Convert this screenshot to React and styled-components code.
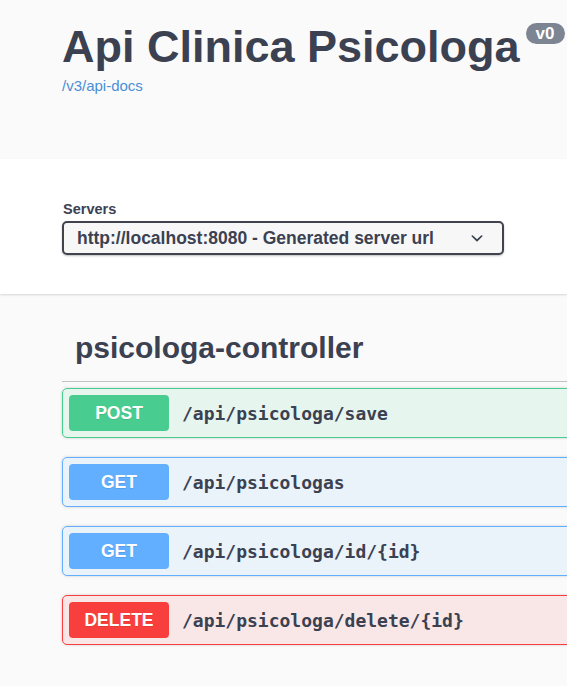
import React from "react";
import styled, { createGlobalStyle } from "styled-components";

const COLORS = {
  text: "#3b4151",
  page: "#fafafa",
  link: "#4a8fd6",
  post: "73, 204, 144",
  get: "97, 175, 254",
  delete: "249, 62, 62",
};

const endpoints = [
  { method: "POST", path: "/api/psicologa/save" },
  { method: "GET", path: "/api/psicologas" },
  { method: "GET", path: "/api/psicologa/id/{id}" },
  { method: "DELETE", path: "/api/psicologa/delete/{id}" },
];

function methodColor(method) {
  if (method === "POST") return COLORS.post;
  if (method === "DELETE") return COLORS.delete;
  return COLORS.get;
}

function App() {
  return (
    <>
      <GlobalStyle />
      <InfoContainer>
        <TitleRow>
          <Title>Api Clinica Psicologa</Title>
          <Version>v0</Version>
        </TitleRow>
        <DocsLink href="#">/v3/api-docs</DocsLink>
      </InfoContainer>

      <SchemeContainer>
        <ServersLabel>Servers</ServersLabel>
        <ServerSelect role="listbox">
          <span>http://localhost:8080 - Generated server url</span>
          <svg width="24" height="24" viewBox="0 0 20 20" aria-hidden="true">
            <path
              fill="#3b4151"
              d="M13.418 7.859a.695.695 0 01.978 0 .68.68 0 010 .969l-3.908 3.83a.697.697 0 01-.979 0l-3.908-3.83a.68.68 0 010-.969.695.695 0 01.978 0L10 11l3.418-3.141z"
            />
          </svg>
        </ServerSelect>
      </SchemeContainer>

      <Main>
        <TagHeading>psicologa-controller</TagHeading>
        <OpList>
          {endpoints.map((op) => (
            <OpBlock key={op.method + op.path} $rgb={methodColor(op.method)}>
              <Method $rgb={methodColor(op.method)}>{op.method}</Method>
              <Path>{op.path}</Path>
            </OpBlock>
          ))}
        </OpList>
      </Main>
    </>
  );
}

const GlobalStyle = createGlobalStyle`
  html, body {
    margin: 0;
    background: ${COLORS.page};
    overflow-x: hidden;
  }
  body {
    font-family: "Liberation Sans", Arial, sans-serif;
    color: ${COLORS.text};
  }
`;

const InfoContainer = styled.section`
  box-sizing: border-box;
  height: 159px;
  padding: 21px 0 0 62px;
`;

const TitleRow = styled.div`
  display: flex;
  align-items: flex-start;
`;

const Title = styled.h2`
  margin: 0;
  font-size: 45px;
  line-height: 51px;
  font-weight: 700;
  color: ${COLORS.text};
  white-space: nowrap;
`;

const Version = styled.span`
  margin: 2px 0 0 6px;
  padding: 0 10px;
  height: 21px;
  line-height: 21px;
  border-radius: 57px;
  background: #7d8492;
  color: #fff;
  font-size: 17px;
  font-weight: 700;
`;

const DocsLink = styled.a`
  display: inline-block;
  margin-top: 5px;
  font-size: 15px;
  line-height: 17px;
  color: ${COLORS.link};
  text-decoration: none;
`;

const SchemeContainer = styled.section`
  box-sizing: border-box;
  height: 135px;
  padding: 42px 0 0 62px;
  background: #fff;
  box-shadow: 0 1px 2px 0 rgba(0, 0, 0, 0.15);
`;

const ServersLabel = styled.div`
  margin: 0 0 3px 1px;
  font-size: 14.5px;
  line-height: 17px;
  font-weight: 700;
`;

const ServerSelect = styled.div`
  box-sizing: border-box;
  display: flex;
  align-items: center;
  justify-content: space-between;
  width: 442px;
  height: 34px;
  padding: 0 13px 0 13px;
  border: 2px solid #41444e;
  border-radius: 5px;
  background: #f7f7f7;
  box-shadow: 0 1px 2px 0 rgba(0, 0, 0, 0.25);
  font-size: 17.5px;
  font-weight: 700;
  white-space: nowrap;
`;

const Main = styled.main`
  padding: 25px 0 40px 62px;
`;

const TagHeading = styled.h3`
  margin: 0;
  padding: 12px 25px 16px 13px;
  border-bottom: 1px solid rgba(59, 65, 81, 0.3);
  font-size: 30px;
  line-height: 34px;
  font-weight: 700;
  white-space: nowrap;
`;

const OpList = styled.div`
  display: flex;
  flex-direction: column;
  gap: 19px;
  padding-top: 6px;
  margin-right: -20px;
`;

const OpBlock = styled.div`
  box-sizing: border-box;
  display: flex;
  align-items: center;
  height: 50px;
  padding: 6px;
  border: 1px solid rgb(${(p) => p.$rgb});
  border-radius: 5px;
  background: rgba(${(p) => p.$rgb}, 0.1);
  box-shadow: 0 0 3px rgba(0, 0, 0, 0.19);
`;

const Method = styled.span`
  box-sizing: border-box;
  display: flex;
  align-items: center;
  justify-content: center;
  min-width: 100px;
  height: 36px;
  border-radius: 4px;
  background: rgb(${(p) => p.$rgb});
  color: #fff;
  font-size: 17.5px;
  font-weight: 700;
  text-shadow: 0 1px 0 rgba(0, 0, 0, 0.1);
`;

const Path = styled.span`
  padding: 0 13px;
  font-family: "DejaVu Sans Mono", "Liberation Mono", monospace;
  font-size: 18px;
  font-weight: 700;
  color: ${COLORS.text};
  white-space: nowrap;
`;

export default App;
